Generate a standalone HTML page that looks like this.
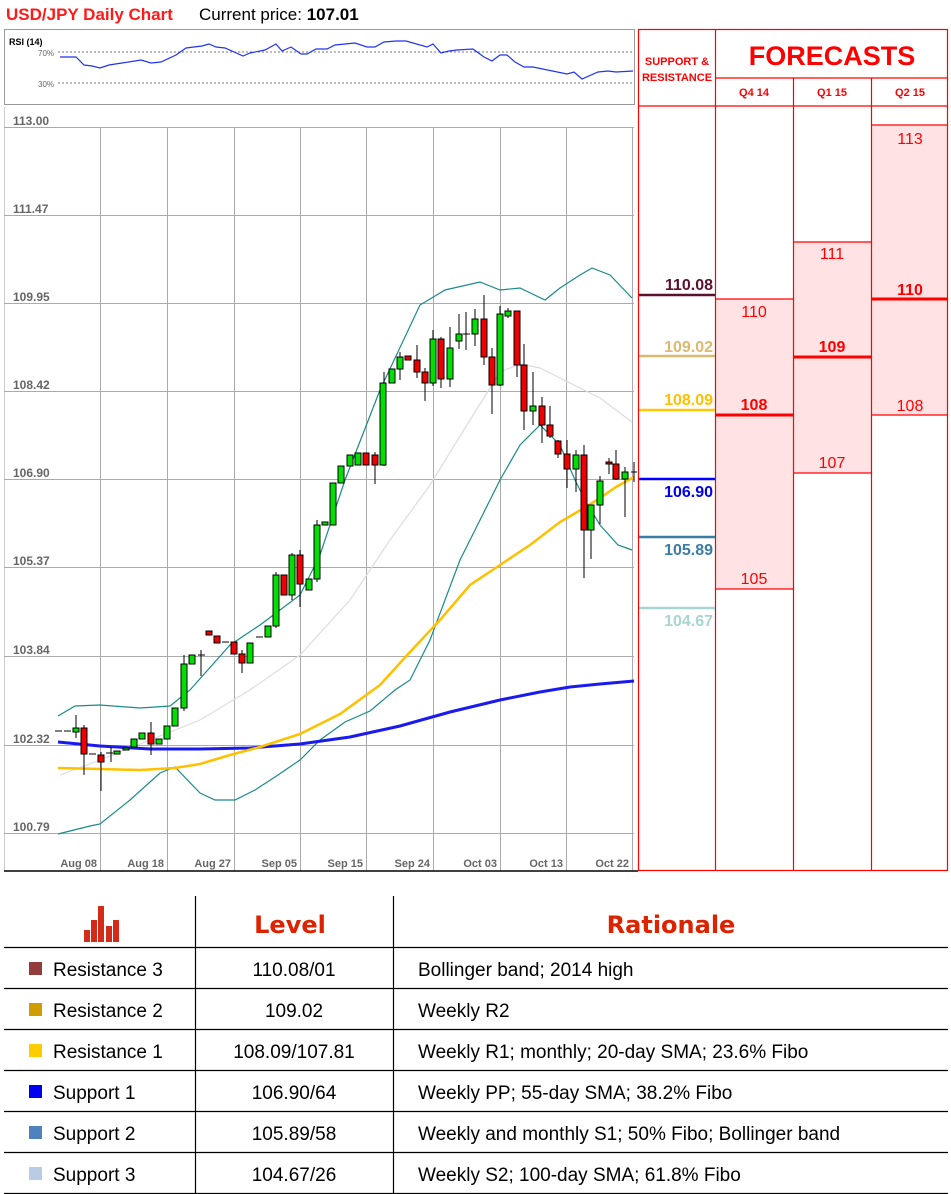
<!DOCTYPE html>
<html><head><meta charset="utf-8"><style>
body{margin:0;width:951px;height:1194px;background:#fff;position:relative;overflow:hidden;font-family:"Liberation Sans",sans-serif}
.t{position:absolute;white-space:nowrap}
</style></head><body>
<svg width="951" height="1194" style="position:absolute;left:0;top:0" font-family="Liberation Sans, sans-serif">
<text x="6" y="20" font-size="17" font-weight="bold" fill="#ff1a1a">USD/JPY Daily Chart</text>
<text x="199" y="20" font-size="17" fill="#000">Current price: <tspan font-weight="bold">107.01</tspan></text>
<!-- RSI -->
<rect x="4.5" y="29.5" width="630" height="75" fill="#fff" stroke="#999"/>
<text x="9" y="45" font-size="9" font-weight="bold">RSI (14)</text>
<text x="38" y="56" font-size="8" fill="#666">70%</text>
<text x="38" y="87" font-size="8" fill="#666">30%</text>
<line x1="58" y1="52" x2="634" y2="52" stroke="#777" stroke-dasharray="2,2"/>
<line x1="58" y1="83" x2="634" y2="83" stroke="#777" stroke-dasharray="2,2"/>
<polyline fill="none" stroke="#2233ee" stroke-width="1.2" points="60,57 76,57 84,65 92,66 100,68 109,65 122,63 141,60 151,63 161,62 176,55 186,48 202,46 209,44 216,47 225,48 243,56 250,53 265,50 276,44 282,51 291,47 301,54 307,54 316,49 327,49 335,45 355,43 367,47 375,47 384,42 396,41 406,41 427,47 433,44 441,53 449,51 457,50 473,49 484,57 492,61 500,55 507,55 515,62 524,67 533,67 567,74 574,72 582,79 598,72 608,71 616,72 633,71"/>
<!-- chart -->
<rect x="4" y="107" width="630" height="764" fill="#fff"/>
<line x1="4.5" y1="107" x2="4.5" y2="871" stroke="#ccc"/>
<g stroke="#aaa" stroke-width="1">
<line x1="4" y1="127.5" x2="634" y2="127.5"/><line x1="4" y1="215.5" x2="634" y2="215.5"/><line x1="4" y1="303.5" x2="634" y2="303.5"/><line x1="4" y1="391.5" x2="634" y2="391.5"/><line x1="4" y1="479.5" x2="634" y2="479.5"/><line x1="4" y1="567.5" x2="634" y2="567.5"/><line x1="4" y1="656.5" x2="634" y2="656.5"/><line x1="4" y1="745.5" x2="634" y2="745.5"/><line x1="4" y1="833.5" x2="634" y2="833.5"/>
<line x1="100.5" y1="127" x2="100.5" y2="871"/><line x1="167.5" y1="127" x2="167.5" y2="871"/><line x1="234.5" y1="127" x2="234.5" y2="871"/><line x1="300.5" y1="127" x2="300.5" y2="871"/><line x1="366.5" y1="127" x2="366.5" y2="871"/><line x1="433.5" y1="127" x2="433.5" y2="871"/><line x1="500.5" y1="127" x2="500.5" y2="871"/><line x1="566.5" y1="127" x2="566.5" y2="871"/><line x1="632.5" y1="127" x2="632.5" y2="871"/>
</g>
<line x1="4" y1="871" x2="638" y2="871" stroke="#000" stroke-width="1.5"/>
<g font-size="12" fill="#666" font-weight="bold">
<text x="13" y="125">113.00</text><text x="13" y="213">111.47</text><text x="13" y="301">109.95</text><text x="13" y="389">108.42</text><text x="13" y="477">106.90</text><text x="13" y="565">105.37</text><text x="13" y="654">103.84</text><text x="13" y="743">102.32</text><text x="13" y="831">100.79</text>
</g>
<g font-size="11" fill="#666" font-weight="bold" text-anchor="end">
<text x="97" y="867">Aug 08</text><text x="164" y="867">Aug 18</text><text x="231" y="867">Aug 27</text><text x="297" y="867">Sep 05</text><text x="363" y="867">Sep 15</text><text x="430" y="867">Sep 24</text><text x="497" y="867">Oct 03</text><text x="563" y="867">Oct 13</text><text x="629" y="867">Oct 22</text>
</g>
<!-- bands -->
<polyline fill="none" stroke="#ddd" stroke-width="1.2" points="60,775 100,760 150,740 200,720 250,690 300,655 350,600 390,540 430,485 470,420 500,372 520,364 540,368 560,378 600,398 632,422"/>
<polyline fill="none" stroke="#1a8a8a" stroke-width="1.2" points="58,716 75,706 100,705 140,708 170,706 190,690 230,645 260,625 280,610 300,595 320,555 345,480 380,390 420,305 445,290 480,282 500,290 520,288 545,300 560,288 580,275 592,268 610,275 632,298"/>
<polyline fill="none" stroke="#1a8a8a" stroke-width="1.2" points="58,834 90,826 100,824 130,800 160,773 175,767 200,793 215,800 235,800 255,790 275,777 300,760 320,740 345,722 370,711 395,690 410,680 430,640 445,600 460,560 480,520 500,480 520,445 540,425 560,445 575,480 585,500 600,525 618,545 632,550"/>
<polyline fill="none" stroke="#1a1aee" stroke-width="3" points="58,742 100,746 150,749 200,749 250,748 300,744 350,737 400,726 450,712 500,700 540,692 570,687 600,684 634,681"/>
<polyline fill="none" stroke="#ffc000" stroke-width="2.5" points="58,768 100,769 140,770 175,768 200,764 230,755 260,747 300,734 340,714 380,685 410,652 440,620 470,585 500,565 530,545 560,522 584,508 600,498 616,487 634,477"/>
<!-- candles -->
<g stroke="#000" stroke-width="1">
<line x1="76" y1="715" x2="76" y2="738"/><line x1="84" y1="725" x2="84" y2="775"/><line x1="101" y1="752" x2="101" y2="791"/><line x1="111" y1="747" x2="111" y2="762"/><line x1="151" y1="722" x2="151" y2="755"/><line x1="184" y1="655" x2="184" y2="711"/><line x1="201" y1="650" x2="201" y2="676"/><line x1="242" y1="650" x2="242" y2="673"/><line x1="276" y1="572" x2="276" y2="628"/><line x1="292" y1="553" x2="292" y2="600"/><line x1="300" y1="550" x2="300" y2="607"/><line x1="317" y1="520" x2="317" y2="582"/><line x1="375" y1="452" x2="375" y2="484"/>
<line x1="384" y1="372" x2="384" y2="466"/><line x1="400" y1="352" x2="400" y2="380"/><line x1="417" y1="345" x2="417" y2="378"/><line x1="425" y1="368" x2="425" y2="401"/><line x1="433" y1="330" x2="433" y2="386"/><line x1="441" y1="337" x2="441" y2="388"/><line x1="450" y1="327" x2="450" y2="387"/><line x1="459" y1="314" x2="459" y2="349"/><line x1="466" y1="312" x2="466" y2="350"/><line x1="475" y1="309" x2="475" y2="346"/><line x1="484" y1="295" x2="484" y2="365"/><line x1="492" y1="348" x2="492" y2="414"/><line x1="500" y1="306" x2="500" y2="386"/><line x1="508" y1="308" x2="508" y2="318"/><line x1="517" y1="311" x2="517" y2="377"/><line x1="524" y1="344" x2="524" y2="430"/><line x1="533" y1="372" x2="533" y2="425"/><line x1="542" y1="397" x2="542" y2="443"/><line x1="550" y1="406" x2="550" y2="438"/><line x1="558" y1="440" x2="558" y2="458"/><line x1="567" y1="440" x2="567" y2="488"/><line x1="576" y1="450" x2="576" y2="492"/><line x1="584" y1="445" x2="584" y2="578"/><line x1="591" y1="505" x2="591" y2="559"/><line x1="600" y1="476" x2="600" y2="524"/><line x1="609" y1="458" x2="609" y2="474"/><line x1="616" y1="450" x2="616" y2="480"/><line x1="625" y1="467" x2="625" y2="517"/><line x1="634" y1="462" x2="634" y2="482"/>
<line x1="55" y1="731" x2="62" y2="731"/><line x1="64" y1="731" x2="71" y2="731"/><line x1="89" y1="754" x2="96" y2="754"/><line x1="106" y1="753" x2="113" y2="753"/><line x1="198" y1="655" x2="205" y2="655"/><line x1="222" y1="642" x2="229" y2="642"/><line x1="256" y1="637" x2="263" y2="637"/><line x1="463" y1="334" x2="470" y2="334"/><line x1="631" y1="472" x2="637" y2="472"/>
</g>
<g stroke="#000" stroke-width="1" fill="#00e000">
<rect x="73" y="728" width="6" height="4"/><rect x="114" y="751" width="6" height="3"/><rect x="123" y="748" width="6" height="2"/><rect x="131" y="739" width="6" height="8"/><rect x="139" y="733" width="6" height="6"/><rect x="156" y="739" width="6" height="5"/><rect x="164" y="726" width="6" height="13"/><rect x="172" y="708" width="6" height="18"/><rect x="181" y="664" width="6" height="44"/><rect x="189" y="655" width="6" height="9"/><rect x="247" y="643" width="6" height="20"/><rect x="265" y="626" width="6" height="11"/><rect x="273" y="575" width="6" height="51"/><rect x="289" y="555" width="6" height="40"/><rect x="306" y="579" width="6" height="11"/><rect x="314" y="525" width="6" height="54"/><rect x="322" y="522" width="6" height="3"/><rect x="330" y="483" width="6" height="42"/><rect x="338" y="466" width="6" height="17"/><rect x="347" y="455" width="6" height="11"/><rect x="355" y="453" width="6" height="12"/>
<rect x="380" y="383" width="6" height="82"/><rect x="389" y="369" width="6" height="14"/><rect x="397" y="357" width="6" height="12"/><rect x="430" y="339" width="6" height="44"/><rect x="447" y="348" width="6" height="31"/><rect x="456" y="334" width="6" height="7"/><rect x="472" y="319" width="6" height="15"/><rect x="497" y="314" width="6" height="71"/><rect x="505" y="311" width="6" height="5"/><rect x="530" y="406" width="6" height="5"/><rect x="573" y="455" width="6" height="14"/><rect x="588" y="505" width="6" height="25"/><rect x="597" y="481" width="6" height="24"/><rect x="622" y="472" width="6" height="7"/>
</g>
<g stroke="#000" stroke-width="1" fill="#ee0000">
<rect x="81" y="728" width="6" height="26"/><rect x="98" y="755" width="6" height="7"/><rect x="148" y="733" width="6" height="11"/><rect x="206" y="631" width="6" height="4"/><rect x="214" y="636" width="6" height="7"/><rect x="231" y="642" width="6" height="12"/><rect x="239" y="654" width="6" height="9"/><rect x="281" y="575" width="6" height="20"/><rect x="297" y="555" width="6" height="29"/><rect x="363" y="453" width="6" height="12"/><rect x="372" y="455" width="6" height="10"/>
<rect x="405" y="356" width="6" height="4"/><rect x="414" y="360" width="6" height="12"/><rect x="422" y="372" width="6" height="11"/><rect x="438" y="339" width="6" height="40"/><rect x="481" y="319" width="6" height="38"/><rect x="489" y="357" width="6" height="28"/><rect x="514" y="311" width="6" height="54"/><rect x="521" y="365" width="6" height="46"/><rect x="539" y="406" width="6" height="19"/><rect x="547" y="425" width="6" height="11"/><rect x="555" y="441" width="6" height="13"/><rect x="564" y="454" width="6" height="15"/><rect x="581" y="455" width="6" height="75"/><rect x="606" y="462" width="6" height="2"/><rect x="613" y="464" width="6" height="15"/>
</g>
<!-- forecast panel -->
<rect x="715" y="299" width="78" height="290" fill="#ffe3e4"/>
<rect x="793" y="242" width="78" height="231" fill="#ffe3e4"/>
<rect x="871" y="125" width="77" height="290" fill="#ffe3e4"/>
<g stroke="#f00" stroke-width="1.2" fill="none">
<rect x="638.5" y="29.5" width="309" height="841"/>
<line x1="715.5" y1="29" x2="715.5" y2="871"/><line x1="793.5" y1="78" x2="793.5" y2="871"/><line x1="871.5" y1="78" x2="871.5" y2="871"/>
<line x1="715" y1="78" x2="948" y2="78"/><line x1="638" y1="106" x2="948" y2="106"/>
<line x1="715" y1="299" x2="793" y2="299"/><line x1="715" y1="589" x2="793" y2="589"/>
<line x1="793" y1="242" x2="871" y2="242"/><line x1="793" y1="473" x2="871" y2="473"/>
<line x1="871" y1="125" x2="948" y2="125"/><line x1="871" y1="415" x2="948" y2="415"/>
</g>
<line x1="715" y1="415" x2="793" y2="415" stroke="#f00" stroke-width="3"/>
<line x1="793" y1="357" x2="871" y2="357" stroke="#f00" stroke-width="3"/>
<line x1="871" y1="299" x2="948" y2="299" stroke="#f00" stroke-width="3"/>
<text x="832" y="65" font-size="27" font-weight="bold" fill="#f00" text-anchor="middle">FORECASTS</text>
<text x="677" y="65" font-size="11" font-weight="bold" fill="#f00" text-anchor="middle">SUPPORT &amp;</text>
<text x="677" y="81" font-size="11" font-weight="bold" fill="#f00" text-anchor="middle">RESISTANCE</text>
<g font-size="11" font-weight="bold" fill="#f00" text-anchor="middle"><text x="754" y="96">Q4 14</text><text x="832" y="96">Q1 15</text><text x="910" y="96">Q2 15</text></g>
<g font-size="16" fill="#f00" text-anchor="middle">
<text x="754" y="317">110</text><text x="754" y="410" font-weight="bold">108</text><text x="754" y="584">105</text>
<text x="832" y="259">111</text><text x="832" y="352" font-weight="bold">109</text><text x="832" y="468">107</text>
<text x="910" y="144">113</text><text x="910" y="295" font-weight="bold">110</text><text x="910" y="411">108</text>
</g>
<line x1="639" y1="295" x2="715" y2="295" stroke="#5c0f2e" stroke-width="2.5"/>
<line x1="639" y1="356" x2="715" y2="356" stroke="#dcb870" stroke-width="2.5"/>
<line x1="639" y1="410" x2="715" y2="410" stroke="#ffc800" stroke-width="2.5"/>
<line x1="639" y1="479" x2="715" y2="479" stroke="#0000ff" stroke-width="2.5"/>
<line x1="639" y1="537" x2="715" y2="537" stroke="#3a7ca5" stroke-width="2.5"/>
<line x1="639" y1="608" x2="715" y2="608" stroke="#a8d4d4" stroke-width="2.5"/>
<g font-size="16" font-weight="bold" text-anchor="end">
<text x="713" y="290" fill="#5c0f2e">110.08</text><text x="713" y="352" fill="#dcb870">109.02</text><text x="713" y="405" fill="#ffc000">108.09</text>
<text x="713" y="497" fill="#0000ee">106.90</text><text x="713" y="555" fill="#3a7ca5">105.89</text><text x="713" y="626" fill="#a8d4d4">104.67</text>
</g>
<!-- table -->
<g stroke="#000" stroke-width="1.2">
<line x1="195.5" y1="896" x2="195.5" y2="1194"/><line x1="393.5" y1="896" x2="393.5" y2="1194"/>
<line x1="4" y1="947.5" x2="948" y2="947.5"/><line x1="4" y1="988.5" x2="948" y2="988.5"/><line x1="4" y1="1029.5" x2="948" y2="1029.5"/><line x1="4" y1="1070.5" x2="948" y2="1070.5"/><line x1="4" y1="1111.5" x2="948" y2="1111.5"/><line x1="4" y1="1152.5" x2="948" y2="1152.5"/><line x1="4" y1="1193.5" x2="948" y2="1193.5"/>
</g>
<g fill="#d42a1a"><rect x="84" y="930" width="6" height="12"/><rect x="91" y="920" width="6" height="22"/><rect x="98" y="906" width="6" height="36"/><rect x="106" y="926" width="6" height="16"/><rect x="113" y="920" width="6" height="22"/></g>
<g font-size="26" font-weight="900" fill="#dd2200" text-anchor="middle" style="font-family:'DejaVu Sans',sans-serif"><text x="290" y="933" font-size="24">Level</text><text x="671" y="933" font-size="24">Rationale</text></g>
<rect x="29" y="962" width="13" height="13" fill="#943c3c"/><rect x="29" y="1003" width="13" height="13" fill="#d09c00"/><rect x="29" y="1044" width="13" height="13" fill="#ffcc00"/><rect x="29" y="1085" width="13" height="13" fill="#0000ee"/><rect x="29" y="1126" width="13" height="13" fill="#4f81bd"/><rect x="29" y="1167" width="13" height="13" fill="#b8cce4"/>
<g font-size="19" fill="#000">
<text x="53" y="976">Resistance 3</text><text x="53" y="1017">Resistance 2</text><text x="53" y="1058">Resistance 1</text><text x="53" y="1099">Support 1</text><text x="53" y="1140">Support 2</text><text x="53" y="1181">Support 3</text>
<g text-anchor="middle"><text x="294" y="976">110.08/01</text><text x="294" y="1017">109.02</text><text x="294" y="1058">108.09/107.81</text><text x="294" y="1099">106.90/64</text><text x="294" y="1140">105.89/58</text><text x="294" y="1181">104.67/26</text></g>
<text x="418" y="976">Bollinger band; 2014 high</text><text x="418" y="1017">Weekly R2</text><text x="418" y="1058">Weekly R1; monthly; 20-day SMA; 23.6% Fibo</text><text x="418" y="1099">Weekly PP; 55-day SMA; 38.2% Fibo</text><text x="418" y="1140">Weekly and monthly S1; 50% Fibo; Bollinger band</text><text x="418" y="1181">Weekly S2; 100-day SMA; 61.8% Fibo</text>
</g>
</svg>
</body></html>
